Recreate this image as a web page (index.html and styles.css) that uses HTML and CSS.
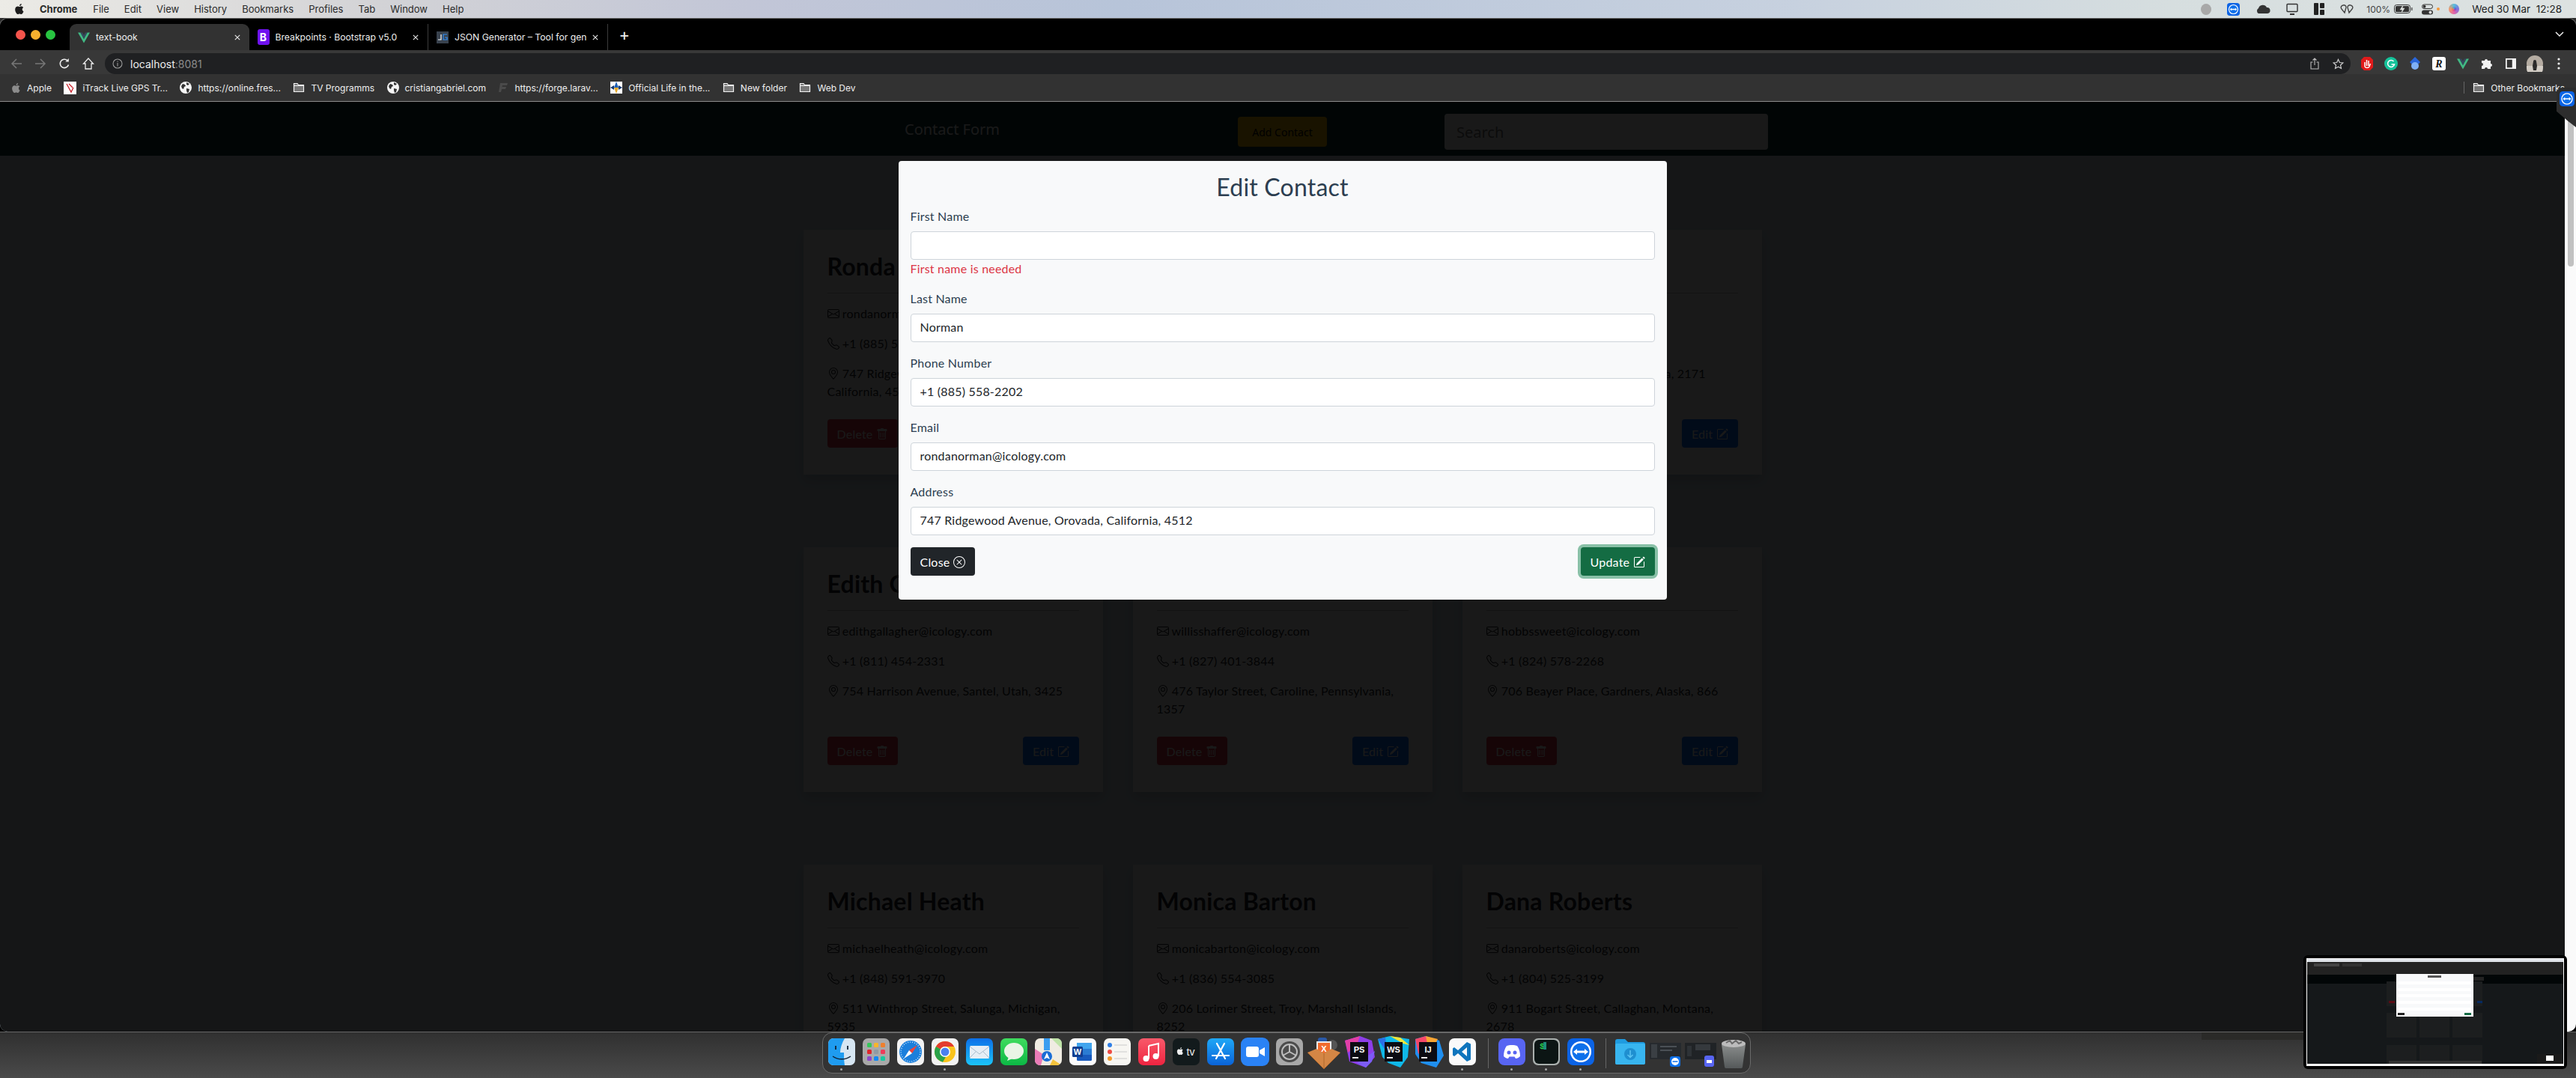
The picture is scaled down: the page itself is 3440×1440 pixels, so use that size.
FILE: index.html
```html
<!DOCTYPE html>
<html lang="en">
<head>
    <meta charset="UTF-8">
    <title>text-book</title>
    <link rel="stylesheet" href="styles.css">
</head>
<body>

    <!-- shared icons -->
    <svg class="defs" width="0" height="0">
        <symbol id="i-envelope" viewBox="0 0 16 16"><path d="M0 4a2 2 0 0 1 2-2h12a2 2 0 0 1 2 2v8a2 2 0 0 1-2 2H2a2 2 0 0 1-2-2V4Zm2-1a1 1 0 0 0-1 1v.217l7 4.2 7-4.2V4a1 1 0 0 0-1-1H2Zm13 2.383-4.708 2.825L15 11.105V5.383Zm-.034 6.876-5.64-3.471L8 9.583l-1.326-.795-5.64 3.47A1 1 0 0 0 2 13h12a1 1 0 0 0 .966-.741ZM1 11.105l4.708-2.897L1 5.383v5.722Z"/></symbol>
        <symbol id="i-phone" viewBox="0 0 16 16"><path d="M3.654 1.328a.678.678 0 0 0-1.015-.063L1.605 2.3c-.483.484-.661 1.169-.45 1.77a17.568 17.568 0 0 0 4.168 6.608 17.569 17.569 0 0 0 6.608 4.168c.601.211 1.286.033 1.77-.45l1.034-1.034a.678.678 0 0 0-.063-1.015l-2.307-1.794a.678.678 0 0 0-.58-.122l-2.19.547a1.745 1.745 0 0 1-1.657-.459L5.482 8.062a1.745 1.745 0 0 1-.46-1.657l.548-2.19a.678.678 0 0 0-.122-.58L3.654 1.328zM1.884.511a1.745 1.745 0 0 1 2.612.163L6.29 2.98c.329.423.445.974.315 1.494l-.547 2.19a.678.678 0 0 0 .178.643l2.457 2.457a.678.678 0 0 0 .644.178l2.189-.547a1.745 1.745 0 0 1 1.494.315l2.306 1.794c.829.645.905 1.87.163 2.611l-1.034 1.034c-.74.74-1.846 1.065-2.877.702a18.634 18.634 0 0 1-7.01-4.42 18.634 18.634 0 0 1-4.42-7.009c-.362-1.03-.037-2.137.703-2.877L1.885.511z"/></symbol>
        <symbol id="i-geo" viewBox="0 0 16 16"><path d="M12.166 8.94c-.524 1.062-1.234 2.12-1.96 3.07A31.493 31.493 0 0 1 8 14.58a31.481 31.481 0 0 1-2.206-2.57c-.726-.95-1.436-2.008-1.96-3.07C3.304 7.867 3 6.862 3 6a5 5 0 0 1 10 0c0 .862-.305 1.867-.834 2.94zM8 16s6-5.686 6-10A6 6 0 0 0 2 6c0 4.314 6 10 6 10z"/><path d="M8 8a2 2 0 1 1 0-4 2 2 0 0 1 0 4zm0 1a3 3 0 1 0 0-6 3 3 0 0 0 0 6z"/></symbol>
        <symbol id="i-trash" viewBox="0 0 16 16"><path d="M5.5 5.5A.5.5 0 0 1 6 6v6a.5.5 0 0 1-1 0V6a.5.5 0 0 1 .5-.5zm2.5 0a.5.5 0 0 1 .5.5v6a.5.5 0 0 1-1 0V6a.5.5 0 0 1 .5-.5zm3 .5a.5.5 0 0 0-1 0v6a.5.5 0 0 0 1 0V6z"/><path d="M14.5 3a1 1 0 0 1-1 1H13v9a2 2 0 0 1-2 2H5a2 2 0 0 1-2-2V4h-.5a1 1 0 0 1-1-1V2a1 1 0 0 1 1-1H6a1 1 0 0 1 1-1h2a1 1 0 0 1 1 1h3.5a1 1 0 0 1 1 1v1zM4.118 4 4 4.059V13a1 1 0 0 0 1 1h6a1 1 0 0 0 1-1V4.059L11.882 4H4.118zM2.5 3V2h11v1h-11z"/></symbol>
        <symbol id="i-pencil" viewBox="0 0 16 16"><path d="M15.502 1.94a.5.5 0 0 1 0 .706L14.459 3.69l-2-2L13.502.646a.5.5 0 0 1 .707 0l1.293 1.293zm-1.75 2.456-2-2L4.939 9.21a.5.5 0 0 0-.121.196l-.805 2.414a.25.25 0 0 0 .316.316l2.414-.805a.5.5 0 0 0 .196-.12l6.813-6.814z"/><path d="M1 13.5A1.5 1.5 0 0 0 2.5 15h11a1.5 1.5 0 0 0 1.5-1.5v-6a.5.5 0 0 0-1 0v6a.5.5 0 0 1-.5.5h-11a.5.5 0 0 1-.5-.5v-11a.5.5 0 0 1 .5-.5H9a.5.5 0 0 0 0-1H2.5A1.5 1.5 0 0 0 1 2.5v11z"/></symbol>
        <symbol id="i-xcircle" viewBox="0 0 16 16"><path d="M8 15A7 7 0 1 1 8 1a7 7 0 0 1 0 14zm0 1A8 8 0 1 0 8 0a8 8 0 0 0 0 16z"/><path d="M4.646 4.646a.5.5 0 0 1 .708 0L8 7.293l2.646-2.647a.5.5 0 0 1 .708.708L8.707 8l2.647 2.646a.5.5 0 0 1-.708.708L8 8.707l-2.646 2.647a.5.5 0 0 1-.708-.708L7.293 8 4.646 5.354a.5.5 0 0 1 0-.708z"/></symbol>
        <symbol id="i-apple" viewBox="0 0 16 18"><path d="M12.2 9.6c0-2 1.6-3 1.7-3-1-1.400-2.400-1.600-2.900-1.600-1.200-.1-2.400.7-3 .7s-1.600-.7-2.600-.7C4 5 2.700 5.800 2 7c-1.400 2.400-.4 6 1 8 .7 1 1.500 2.100 2.500 2 1 0 1.400-.6 2.600-.6s1.500.6 2.600.6 1.800-1 2.400-2c.8-1.100 1.100-2.200 1.100-2.300-.1 0-2-.8-2-3.100zM10.300 3.400c.5-.7.900-1.600.8-2.500-.8 0-1.700.5-2.300 1.200-.5.6-.9 1.500-.8 2.400.9.100 1.800-.4 2.300-1.100z"/></symbol>
        <symbol id="i-globe" viewBox="0 0 16 16"><circle cx="8" cy="8" r="8" fill="#f4f4f4"/><path d="M4 3l3 1 1 2-2 1-1 3-2-1-1-3zM9 9l4 1-1 4-2 1-1-3zM9 1l4 2-2 2-2-1z" fill="#323232"/></symbol>
        <symbol id="i-folder" viewBox="0 0 16 16"><path d="M1.500 2.500h4.500l1.500 2h7v9h-13z" fill="#777" stroke="#f2f2f2" stroke-width="1.200"/><path d="M1.500 5.500h13" stroke="#f2f2f2" stroke-width="1.200"/></symbol>
        <symbol id="i-x" viewBox="0 0 10 10"><path d="M1 1l8 8M9 1l-8 8" stroke="#eee" stroke-width="1.300"/></symbol>
        <symbol id="i-vue" viewBox="0 0 16 16"><path d="M0 1.500h3.400L8 10l4.600-8.500H16L8 15.500z" fill="#41b883"/><path d="M3.400 1.500h2.700L8 5l1.900-3.500h2.700L8 10z" fill="#35495e"/></symbol>
        <symbol id="i-tv" viewBox="0 0 36 36"><rect width="36" height="36" rx="8" fill="#0b63e5"/><circle cx="18" cy="18" r="14" fill="#fff"/><circle cx="18" cy="18" r="11.500" fill="#0e71eb"/><path d="M8 18l5-4v2.500h10V14l5 4-5 4v-2.500H13V22z" fill="#fff"/></symbol>
    </svg>

    <div class="menubar">
        <svg class="apple-logo" width="14" height="16"><use href="#i-apple"/></svg>
        <strong>Chrome</strong>
        <span>File</span><span>Edit</span><span>View</span><span>History</span><span>Bookmarks</span><span>Profiles</span><span>Tab</span><span>Window</span><span>Help</span>

        <div class="status">
            <i class="st-dot"></i>
            <svg width="17" height="17"><use href="#i-tv"/></svg>
            <svg width="20" height="14" viewBox="0 0 20 14"><path d="M4 13a4 4 0 0 1 0-7 6 6 0 0 1 11-1 4 4 0 0 1 1 8z" fill="#333"/></svg>
            <svg width="16" height="16" viewBox="0 0 16 16" fill="none" stroke="#333" stroke-width="1.400"><rect x="1" y="1.500" width="14" height="10" rx="1"/><path d="M5 15h6" stroke-width="2"/></svg>
            <svg width="14" height="16" viewBox="0 0 14 16" fill="#222"><rect width="6" height="16" rx="1"/><rect x="8" width="6" height="7" rx="1"/><rect x="8" y="9" width="6" height="7" rx="1"/></svg>
            <svg width="18" height="15" viewBox="0 0 18 15" fill="none" stroke="#444" stroke-width="1.400"><path d="M4 2a3 3 0 0 1 4 3l-2 7-4-5a3 3 0 0 1 2-5zM14 2a3 3 0 0 0-4 3l2 7 4-5a3 3 0 0 0-2-5z"/></svg>
            <span class="st-pct">100%</span>
            <svg width="25" height="12" viewBox="0 0 25 12"><rect x=".5" y=".5" width="21" height="11" rx="3" fill="none" stroke="#333"/><rect x="2" y="2" width="18" height="8" rx="1.500" fill="#333"/><path d="M12 1L8 7h3l-1 4 4-6h-3z" fill="#dfe3e0" stroke="#dfe3e0" stroke-width=".5"/><rect x="23" y="4" width="1.500" height="4" fill="#555"/></svg>
            <svg class="st-toggle" width="15" height="15" viewBox="0 0 15 15"><rect x=".5" y="1" width="14" height="5.500" rx="2.700" fill="none" stroke="#333"/><circle cx="3.500" cy="3.700" r="2" fill="#333"/><rect y="8.500" width="15" height="6" rx="3" fill="#333"/><circle cx="11.500" cy="11.500" r="2" fill="#ddd"/></svg>
            <i class="st-orange"></i>
            <i class="st-siri"></i>
            <span class="st-clock">Wed 30 Mar&nbsp;&nbsp;12:28</span>
        </div>
    </div>

    <div class="window">
        <div class="tabstrip">
            <div class="lights"><i class="red"></i><i class="yellow"></i><i class="green"></i></div>
            <div class="tab active">
                <svg width="16" height="16"><use href="#i-vue"/></svg>
                <span class="tab-title">text-book</span>
                <svg class="tab-x" width="8" height="8"><use href="#i-x"/></svg>
            </div>
            <div class="tab">
                <b class="fav-b">B</b>
                <span class="tab-title">Breakpoints · Bootstrap v5.0</span>
                <svg class="tab-x" width="8" height="8"><use href="#i-x"/></svg>
            </div>
            <div class="tab">
                <svg width="16" height="16" viewBox="0 0 16 16"><rect width="16" height="16" fill="#39424e"/><path d="M6 4v7H2" fill="none" stroke="#fff" stroke-width="1.200"/><path d="M14 4H9v7h5V8h-3" fill="none" stroke="#2e8df5" stroke-width="1.200"/></svg>
                <span class="tab-title">JSON Generator – Tool for gen</span>
                <svg class="tab-x" width="8" height="8"><use href="#i-x"/></svg>
            </div>
            <span class="tab-plus">+</span>
            <svg class="tab-chevron" width="12" height="8" viewBox="0 0 12 8"><path d="M1 1l5 5 5-5" fill="none" stroke="#eee" stroke-width="1.500"/></svg>
        </div>

        <div class="toolbar">
            <div class="nav-icons">
                <svg width="16" height="16" viewBox="0 0 16 16" fill="none" stroke="#777" stroke-width="1.500"><path d="M15 8H2M8 2L2 8l6 6"/></svg>
                <svg width="16" height="16" viewBox="0 0 16 16" fill="none" stroke="#777" stroke-width="1.500"><path d="M1 8h13M8 2l6 6-6 6"/></svg>
                <svg width="16" height="16" viewBox="0 0 16 16" fill="none" stroke="#eee" stroke-width="1.600"><path d="M13.500 9.500A5.700 5.700 0 1 1 12 3.800"/><path d="M13.800 1v4.500H9.300" fill="#eee" stroke="none"/></svg>
                <svg width="16" height="16" viewBox="0 0 16 16" fill="none" stroke="#eee" stroke-width="1.300"><path d="M8 1L1.500 8H4v7h8V8h2.500z"/></svg>
            </div>
            <div class="omnibox">
                <svg width="14" height="14" viewBox="0 0 14 14" fill="none" stroke="#999" stroke-width="1.100"><circle cx="7" cy="7" r="6"/><path d="M7 6v4.500M7 3.500v1.200"/></svg>
                <span class="url">localhost<em>:8081</em></span>
                <svg class="omni-share" width="12" height="16" viewBox="0 0 12 16" fill="none" stroke="#bbb" stroke-width="1.100"><path d="M3.500 6H1v9h10V6H8.500M6 10V1M3.500 3.500L6 1l2.500 2.500"/></svg>
                <svg class="omni-star" width="15" height="15" viewBox="0 0 16 16" fill="none" stroke="#ccc" stroke-width="1.300"><path d="M8 1.500l2 4.400 4.800.5-3.600 3.200 1 4.700L8 11.900l-4.200 2.400 1-4.700L1.200 6.400 6 5.900z"/></svg>
            </div>
            <div class="ext-icons">
                <svg width="18" height="20" viewBox="0 0 18 20"><path d="M5 1h8l4 4v10l-4 4H5l-4-4V5z" fill="#e01b1b"/><path d="M6 14V8M8.500 13V5M11 13V6M6 14c1 2 5 2 6 0l1.500-4" stroke="#fff" stroke-width="1.500" fill="none"/></svg>
                <svg width="18" height="18" viewBox="0 0 18 18"><circle cx="9" cy="9" r="9" fill="#15c39a"/><path d="M12.500 6a4.500 4.500 0 1 0 1 4H9.500" fill="none" stroke="#fff" stroke-width="1.500"/></svg>
                <svg width="18" height="18" viewBox="0 0 18 18"><path d="M9 0l7 7-3 3H5L2 7z" fill="#2a66d9"/><circle cx="9" cy="12" r="5" fill="#7fb0f5"/></svg>
                <svg width="18" height="18" viewBox="0 0 18 18"><rect width="18" height="18" rx="3" fill="#fff"/><text x="9" y="14" font-family="Liberation Serif, serif" font-size="14" font-style="italic" font-weight="700" text-anchor="middle" fill="#111">R</text></svg>
                <svg width="18" height="16"><use href="#i-vue"/></svg>
                <svg width="16" height="16" viewBox="0 0 16 16"><path d="M1 4h4a2 2 0 1 1 4 0h4v4a2 2 0 1 1 0 4v3H9a2 2 0 1 0-4 0H1v-4a2 2 0 1 0 0-4z" fill="#f2f2f2"/></svg>
                <svg width="14" height="16" viewBox="0 0 16 16"><rect width="16" height="16" fill="#f4f4f4"/><rect x="2" y="2" width="8" height="12" fill="#333"/></svg>
                <svg width="22" height="22" viewBox="0 0 22 22"><circle cx="11" cy="11" r="11" fill="#b5aca2"/><path d="M0 14h22v3a11 11 0 0 1-22 0z" fill="#d2ccc4"/><path d="M9 8a2 2 0 0 1 4 0l1 6-1 6H9l-1-6z" fill="#2b2a2a"/></svg>
                <svg width="4" height="16" viewBox="0 0 4 16" fill="#eee"><circle cx="2" cy="2" r="1.600"/><circle cx="2" cy="8" r="1.600"/><circle cx="2" cy="14" r="1.600"/></svg>
            </div>
        </div>

        <div class="bookmarks">
            <span class="bm"><svg width="13" height="15" class="bm-apple"><use href="#i-apple"/></svg>Apple</span>
            <span class="bm"><svg width="17" height="17" viewBox="0 0 17 17"><rect width="17" height="17" fill="#fff"/><path d="M4 3l6 11 3-6M7 3l5 5" fill="none" stroke="#c8202a" stroke-width="1.300"/></svg>iTrack Live GPS Tr...</span>
            <span class="bm"><svg width="16" height="16"><use href="#i-globe"/></svg>https://online.fres...</span>
            <span class="bm"><svg width="16" height="16"><use href="#i-folder"/></svg>TV Programms</span>
            <span class="bm"><svg width="16" height="16"><use href="#i-globe"/></svg>cristiangabriel.com</span>
            <span class="bm"><svg width="14" height="14" viewBox="0 0 14 14"><path d="M3 1h10l-1 3H6L5.500 6H11l-1 3H5l-1 4H1z" fill="#4a4a4a"/></svg>https://forge.larav...</span>
            <span class="bm"><svg width="16" height="16" viewBox="0 0 16 16"><rect width="16" height="16" fill="#fff"/><path d="M8 0l3 8H5z" fill="#1e5fb4"/><path d="M8 16L5 8h6z" fill="#e8a92a"/><path d="M0 8l5-3v6zM16 8l-5-3v6z" fill="#123a75"/></svg>Official Life in the...</span>
            <span class="bm"><svg width="16" height="16"><use href="#i-folder"/></svg>New folder</span>
            <span class="bm"><svg width="16" height="16"><use href="#i-folder"/></svg>Web Dev</span>
            <span class="bm bm-other"><svg width="16" height="16"><use href="#i-folder"/></svg>Other Bookmarks</span>
        </div>

        <div class="content">
            <div class="page">
                <nav class="topnav">
                    <span class="brand">Contact Form</span>
                    <button class="add-btn">Add Contact</button>
                    <input class="search" type="text" placeholder="Search">
                </nav>

                <div class="cards">
                    <div class="card">
                        <h2>Ronda Norman</h2>
                        <hr>
                        <p><svg class="ic"><use href="#i-envelope"/></svg> rondanorman@icology.com</p>
                        <p><svg class="ic"><use href="#i-phone"/></svg> +1 (885) 558-2202</p>
                        <p class="addr"><svg class="ic"><use href="#i-geo"/></svg> 747 Ridgewood Avenue, Orovada, California, 4512</p>
                        <div class="actions">
                            <button class="btn danger">Delete <svg class="ic"><use href="#i-trash"/></svg></button>
                            <button class="btn primary">Edit <svg class="ic"><use href="#i-pencil"/></svg></button>
                        </div>
                    </div>
                    <div class="card">
                        <h2>Lela Fox</h2>
                        <hr>
                        <p><svg class="ic"><use href="#i-envelope"/></svg> lelafox@icology.com</p>
                        <p><svg class="ic"><use href="#i-phone"/></svg> +1 (830) 412-2790</p>
                        <p class="addr"><svg class="ic"><use href="#i-geo"/></svg> 310 Quay Street, Elwood, Iowa, 6120</p>
                        <div class="actions">
                            <button class="btn danger">Delete <svg class="ic"><use href="#i-trash"/></svg></button>
                            <button class="btn primary">Edit <svg class="ic"><use href="#i-pencil"/></svg></button>
                        </div>
                    </div>
                    <div class="card">
                        <h2>Rosa Kirk</h2>
                        <hr>
                        <p><svg class="ic"><use href="#i-envelope"/></svg> rosakirk@icology.com</p>
                        <p><svg class="ic"><use href="#i-phone"/></svg> +1 (872) 536-1184</p>
                        <p class="addr"><svg class="ic"><use href="#i-geo"/></svg> 205 Vista Place, Marion, Manila, 2171</p>
                        <div class="actions">
                            <button class="btn danger">Delete <svg class="ic"><use href="#i-trash"/></svg></button>
                            <button class="btn primary">Edit <svg class="ic"><use href="#i-pencil"/></svg></button>
                        </div>
                    </div>
                    <div class="card">
                        <h2>Edith Gallagher</h2>
                        <hr>
                        <p><svg class="ic"><use href="#i-envelope"/></svg> edithgallagher@icology.com</p>
                        <p><svg class="ic"><use href="#i-phone"/></svg> +1 (811) 454-2331</p>
                        <p class="addr"><svg class="ic"><use href="#i-geo"/></svg> 754 Harrison Avenue, Santel, Utah, 3425</p>
                        <div class="actions">
                            <button class="btn danger">Delete <svg class="ic"><use href="#i-trash"/></svg></button>
                            <button class="btn primary">Edit <svg class="ic"><use href="#i-pencil"/></svg></button>
                        </div>
                    </div>
                    <div class="card">
                        <h2>Willis Shaffer</h2>
                        <hr>
                        <p><svg class="ic"><use href="#i-envelope"/></svg> willisshaffer@icology.com</p>
                        <p><svg class="ic"><use href="#i-phone"/></svg> +1 (827) 401-3844</p>
                        <p class="addr"><svg class="ic"><use href="#i-geo"/></svg> 476 Taylor Street, Caroline, Pennsylvania, 1357</p>
                        <div class="actions">
                            <button class="btn danger">Delete <svg class="ic"><use href="#i-trash"/></svg></button>
                            <button class="btn primary">Edit <svg class="ic"><use href="#i-pencil"/></svg></button>
                        </div>
                    </div>
                    <div class="card">
                        <h2>Hobbs Sweet</h2>
                        <hr>
                        <p><svg class="ic"><use href="#i-envelope"/></svg> hobbssweet@icology.com</p>
                        <p><svg class="ic"><use href="#i-phone"/></svg> +1 (824) 578-2268</p>
                        <p class="addr"><svg class="ic"><use href="#i-geo"/></svg> 706 Beayer Place, Gardners, Alaska, 866</p>
                        <div class="actions">
                            <button class="btn danger">Delete <svg class="ic"><use href="#i-trash"/></svg></button>
                            <button class="btn primary">Edit <svg class="ic"><use href="#i-pencil"/></svg></button>
                        </div>
                    </div>
                    <div class="card">
                        <h2>Michael Heath</h2>
                        <hr>
                        <p><svg class="ic"><use href="#i-envelope"/></svg> michaelheath@icology.com</p>
                        <p><svg class="ic"><use href="#i-phone"/></svg> +1 (848) 591-3970</p>
                        <p class="addr"><svg class="ic"><use href="#i-geo"/></svg> 511 Winthrop Street, Salunga, Michigan, 5935</p>
                    </div>
                    <div class="card">
                        <h2>Monica Barton</h2>
                        <hr>
                        <p><svg class="ic"><use href="#i-envelope"/></svg> monicabarton@icology.com</p>
                        <p><svg class="ic"><use href="#i-phone"/></svg> +1 (836) 554-3085</p>
                        <p class="addr"><svg class="ic"><use href="#i-geo"/></svg> 206 Lorimer Street, Troy, Marshall Islands, 8252</p>
                    </div>
                    <div class="card">
                        <h2>Dana Roberts</h2>
                        <hr>
                        <p><svg class="ic"><use href="#i-envelope"/></svg> danaroberts@icology.com</p>
                        <p><svg class="ic"><use href="#i-phone"/></svg> +1 (804) 525-3199</p>
                        <p class="addr"><svg class="ic"><use href="#i-geo"/></svg> 911 Bogart Street, Callaghan, Montana, 2678</p>
                    </div>
                </div>

                <!-- modal sits over the dimmed page -->
                <div class="backdrop">
                    <form class="modal">
                        <h2>Edit Contact</h2>
                        <label>First Name</label>
                        <input type="text" value="">
                        <div class="error">First name is needed</div>
                        <label>Last Name</label>
                        <input class="spaced" type="text" value="Norman">
                        <label>Phone Number</label>
                        <input class="spaced" type="text" value="+1 (885) 558-2202">
                        <label>Email</label>
                        <input class="spaced" type="text" value="rondanorman@icology.com">
                        <label>Address</label>
                        <input class="spaced" type="text" value="747 Ridgewood Avenue, Orovada, California, 4512">
                        <div class="modal-actions">
                            <button type="button" class="btn dark">Close <svg class="ic"><use href="#i-xcircle"/></svg></button>
                            <button type="button" class="btn update">Update <svg class="ic"><use href="#i-pencil"/></svg></button>
                        </div>
                    </form>
                </div>
            </div>
            <div class="scrollbar"><div class="thumb"></div></div>
        </div>

        <div class="tv-handle"><svg width="20" height="20"><use href="#i-tv"/></svg></div>
    </div>

    <div class="dock-row">
        <div class="dock">
            <!-- Finder -->
            <div class="app"><svg viewBox="0 0 36 36"><rect width="36" height="36" rx="7" fill="#d6e6f2"/><path d="M7 0h15c-4 7-6 13-6 19h5c0 6 0 11 1 17H7a7 7 0 0 1-7-7V7a7 7 0 0 1 7-7z" fill="#1f9cf0"/><path d="M10 10v5M26 10v5" stroke="#123" stroke-width="1.800"/><path d="M6 24c7 5 17 5 24 0" fill="none" stroke="#123" stroke-width="1.300"/></svg><i class="run"></i></div>
            <!-- Launchpad -->
            <div class="app"><svg viewBox="0 0 36 36"><rect width="36" height="36" rx="7" fill="#a9a9a9"/><rect x="6" y="6" width="6" height="6" rx="1.500" fill="#35c759"/><rect x="15" y="6" width="6" height="6" rx="1.500" fill="#f7b52b"/><rect x="24" y="6" width="6" height="6" rx="1.500" fill="#ee7f2d"/><rect x="6" y="15" width="6" height="6" rx="1.500" fill="#e0262b"/><rect x="15" y="15" width="6" height="6" rx="1.500" fill="#8f9aa3"/><rect x="24" y="15" width="6" height="6" rx="1.500" fill="#ee3a5a"/><rect x="6" y="24" width="6" height="6" rx="1.500" fill="#8d49c9"/><rect x="15" y="24" width="6" height="6" rx="1.500" fill="#1489f2"/><rect x="24" y="24" width="6" height="6" rx="1.500" fill="#17c8a0"/></svg></div>
            <!-- Safari -->
            <div class="app"><svg viewBox="0 0 36 36"><rect width="36" height="36" rx="7" fill="#f2f2f2"/><circle cx="18" cy="18" r="15" fill="#1b7fdc"/><circle cx="18" cy="18" r="13" fill="none" stroke="#cfe6fa" stroke-width="1.500" stroke-dasharray="1 2"/><path d="M27 9l-11 7 4 4z" fill="#f0453a"/><path d="M9 27l11-7-4-4z" fill="#fff"/></svg></div>
            <!-- Chrome -->
            <div class="app"><svg viewBox="0 0 36 36"><rect width="36" height="36" rx="7" fill="#f2f2f2"/><circle cx="18" cy="18" r="14" fill="#f9c31c"/><path d="M18 4a14 14 0 0 1 12.100 7H18a7 7 0 0 0-6 3.500L5.900 11A14 14 0 0 1 18 4z" fill="#e33b2e"/><path d="M5.900 11A14 14 0 0 0 15 31.700l6-10.500a7 7 0 0 1-9-6.700z" fill="#2aa24a"/><circle cx="18" cy="18" r="7" fill="#fff"/><circle cx="18" cy="18" r="5.500" fill="#4a80ee"/></svg><i class="run"></i></div>
            <!-- Mail -->
            <div class="app"><svg viewBox="0 0 36 36"><defs><linearGradient id="g-mail" x1="0" y1="0" x2="0" y2="1"><stop offset="0" stop-color="#0c6fe8"/><stop offset="1" stop-color="#1cc4f8"/></linearGradient></defs><rect width="36" height="36" rx="7" fill="url(#g-mail)"/><rect x="5" y="10" width="26" height="17" rx="1.500" fill="#e6eef5"/><path d="M5 11l13 10 13-10M5 26l9-9M31 26l-9-9" fill="none" stroke="#a9bccb"/></svg></div>
            <!-- Messages -->
            <div class="app"><svg viewBox="0 0 36 36"><defs><linearGradient id="g-msg" x1="0" y1="0" x2="0" y2="1"><stop offset="0" stop-color="#3fdc5e"/><stop offset="1" stop-color="#0cb845"/></linearGradient></defs><rect width="36" height="36" rx="7" fill="url(#g-msg)"/><ellipse cx="18" cy="17" rx="13" ry="11" fill="#e9f5e6"/><path d="M11 25l-2 5 7-3z" fill="#e9f5e6"/></svg></div>
            <!-- Maps -->
            <div class="app"><svg viewBox="0 0 36 36"><clipPath id="c-maps"><rect width="36" height="36" rx="7"/></clipPath><g clip-path="url(#c-maps)"><rect width="36" height="36" fill="#f0ece2"/><path d="M0 14l12 8-4 14H0z" fill="#ea7bb7"/><path d="M22 0h14v14z" fill="#bfe4a8"/><path d="M12 0h8v16h-8z" fill="#3a9df0"/><path d="M20 36l4-8 12 8z" fill="#f5c33c"/></g><circle cx="16" cy="24" r="7" fill="#1a6dd6"/><path d="M16 19l4 9-4-2-4 2z" fill="#fff"/></svg></div>
            <!-- Word -->
            <div class="app"><svg viewBox="0 0 36 36"><rect width="36" height="36" rx="7" fill="#fbfbfb"/><rect x="10" y="6" width="20" height="24" rx="1.500" fill="#185abd"/><rect x="10" y="6" width="20" height="8" fill="#41a5ee"/><rect x="10" y="14" width="20" height="8" fill="#2b7cd3"/><rect x="4" y="11" width="14" height="14" rx="1.500" fill="#103f91"/><text x="11" y="22" font-family="Liberation Sans, sans-serif" font-size="11" font-weight="700" text-anchor="middle" fill="#fff">W</text></svg></div>
            <!-- Reminders -->
            <div class="app"><svg viewBox="0 0 36 36"><rect width="36" height="36" rx="7" fill="#f7f6f2"/><circle cx="8" cy="9" r="3" fill="#2f7fe6"/><circle cx="8" cy="18" r="3" fill="#ef4b45"/><circle cx="8" cy="27" r="3" fill="#f39a2d"/><path d="M14 9h17M14 18h17M14 27h17" stroke="#c9c9c9" stroke-width="1.200"/></svg></div>
            <!-- Music -->
            <div class="app"><svg viewBox="0 0 36 36"><defs><linearGradient id="g-mus" x1="0" y1="0" x2="0" y2="1"><stop offset="0" stop-color="#f9596a"/><stop offset="1" stop-color="#ee2440"/></linearGradient></defs><rect width="36" height="36" rx="7" fill="url(#g-mus)"/><path d="M14 10l13-3v17" fill="none" stroke="#fff" stroke-width="2"/><path d="M14 10v17" stroke="#fff" stroke-width="2"/><circle cx="10.500" cy="27" r="4" fill="#fff"/><circle cx="23.500" cy="24" r="4" fill="#fff"/></svg></div>
            <!-- Apple TV -->
            <div class="app"><svg viewBox="0 0 36 36"><rect width="36" height="36" rx="7" fill="#121a1c"/><use href="#i-apple" x="5" y="11" width="10" height="12" fill="#eee"/><text x="24" y="23" font-family="Liberation Sans, sans-serif" font-size="14" text-anchor="middle" fill="#eee">tv</text></svg></div>
            <!-- App Store -->
            <div class="app"><svg viewBox="0 0 36 36"><defs><linearGradient id="g-as" x1="0" y1="0" x2="0" y2="1"><stop offset="0" stop-color="#1fa8f7"/><stop offset="1" stop-color="#0a63d8"/></linearGradient></defs><rect width="36" height="36" rx="7" fill="url(#g-as)"/><path d="M13 7l11 20M23 7L12 27M7 23h22" stroke="#fff" stroke-width="2.200" stroke-linecap="round"/></svg></div>
            <!-- Zoom -->
            <div class="app wide"><svg viewBox="0 0 38 38"><rect width="38" height="38" rx="9" fill="#2a82f5"/><rect x="7" y="12" width="17" height="14" rx="3" fill="#fff"/><path d="M25 17l7-4v12l-7-4z" fill="#fff"/></svg></div>
            <!-- System Preferences -->
            <div class="app"><svg viewBox="0 0 36 36"><rect width="36" height="36" rx="7" fill="#a8a8a8"/><circle cx="18" cy="18" r="14" fill="#4c4c4c"/><circle cx="18" cy="18" r="10" fill="none" stroke="#bdbdbd" stroke-width="2"/><path d="M18 18V8M18 18l-9 5M18 18l9 5" stroke="#bdbdbd" stroke-width="2"/></svg></div>
            <!-- XAMPP -->
            <div class="app wide2"><svg viewBox="0 0 44 44"><rect x="14" y="2" width="12" height="14" rx="3" fill="#2958a8"/><circle cx="33" cy="12" r="7" fill="#555"/><rect x="12" y="7" width="20" height="18" fill="#eaeaea"/><rect x="14" y="9" width="16" height="14" fill="#f26b2d"/><text x="22" y="21" font-family="Liberation Sans, sans-serif" font-size="11" font-weight="700" text-anchor="middle" fill="#fff">X</text><path d="M0 22l12-5 10 6 10-6 12 5-8 8-14 14-14-14z" fill="#d48645"/><path d="M22 23v21M0 22l22 22 22-22" fill="none" stroke="#a65f26" stroke-width=".8"/></svg></div>
            <!-- PhpStorm -->
            <div class="app jb"><svg viewBox="0 0 42 42"><path d="M2 6L22 0l16 6 4 22-12 14L8 34z" fill="#8d3ee8"/><path d="M2 6L22 0l-4 12L6 22z" fill="#e23fa6"/><path d="M42 20l-4 14-8 8-12-6z" fill="#7c5cf5"/><rect x="9" y="8" width="24" height="26" fill="#0b0b12"/><text x="21" y="22" font-family="Liberation Sans, sans-serif" font-size="11" font-weight="700" text-anchor="middle" fill="#fff">PS</text><rect x="12" y="28" width="8" height="1.800" fill="#fff"/></svg></div>
            <!-- WebStorm -->
            <div class="app jb"><svg viewBox="0 0 42 42"><path d="M0 4l16-4 26 4-2 24-10 14-16-6-8-8z" fill="#0fb8e8"/><path d="M16 0l14 2 12 10-8-2z" fill="#f0e53a"/><path d="M0 4l10-2 2 20z" fill="#2a6fe8"/><rect x="9" y="8" width="24" height="26" fill="#0b0b12"/><text x="21" y="22" font-family="Liberation Sans, sans-serif" font-size="11" font-weight="700" text-anchor="middle" fill="#fff">WS</text><rect x="12" y="28" width="8" height="1.800" fill="#fff"/></svg></div>
            <!-- IntelliJ -->
            <div class="app jb"><svg viewBox="0 0 42 42"><path d="M4 4l14-4 18 6 6 20-10 16-20-6-8-12z" fill="#1f8ff0"/><path d="M4 4l14-4 4 10-14 14z" fill="#f5486a"/><path d="M18 0l16 4-4 8-10-2z" fill="#f9a533"/><rect x="9" y="8" width="24" height="26" fill="#0b0b12"/><text x="21" y="22" font-family="Liberation Sans, sans-serif" font-size="11" font-weight="700" text-anchor="middle" fill="#fff">IJ</text><rect x="12" y="28" width="8" height="1.800" fill="#fff"/></svg></div>
            <!-- VS Code -->
            <div class="app"><svg viewBox="0 0 36 36"><rect width="36" height="36" rx="7" fill="#fafafa"/><path d="M24 5l5 2.500v21L24 31 12 20l-5 4-2-1.500V13.500L7 12l5 4zM24 12l-7 6 7 6z" fill="#0f75bd"/></svg><i class="run"></i></div>
            <i class="dock-sep"></i>
            <!-- Discord -->
            <div class="app"><svg viewBox="0 0 36 36"><rect width="36" height="36" rx="8" fill="#5865f2"/><path d="M11 10c3-1.500 11-1.500 14 0 3 4 4 9 4 14-2 2-4 3-6 3l-1.500-2.500h-7L13 27c-2 0-4-1-6-3 0-5 1-10 4-14z" fill="#fff"/><circle cx="14" cy="19" r="2.500" fill="#5865f2"/><circle cx="22" cy="19" r="2.500" fill="#5865f2"/></svg><i class="run"></i></div>
            <!-- iTerm -->
            <div class="app"><svg viewBox="0 0 36 36"><rect width="36" height="36" rx="7" fill="#aab0ae"/><rect x="2" y="2" width="32" height="32" rx="6" fill="#0c1514"/><text x="9" y="14" font-family="Liberation Mono, monospace" font-size="11" font-weight="700" fill="#27d050">$</text><rect x="14" y="5" width="4" height="10" fill="#1c8f7a"/></svg><i class="run"></i></div>
            <!-- TeamViewer -->
            <div class="app"><svg viewBox="0 0 36 36"><use href="#i-tv"/></svg><i class="run"></i></div>
            <i class="dock-sep sep2"></i>
            <!-- Downloads folder -->
            <div class="app wide3"><svg viewBox="0 0 40 36"><path d="M0 4a3 3 0 0 1 3-3h10l4 4h20a3 3 0 0 1 3 3v24a3 3 0 0 1-3 3H3a3 3 0 0 1-3-3z" fill="#1f9bdf"/><rect y="7" width="40" height="28" rx="2" fill="#38b5ef"/><circle cx="20" cy="21" r="8" fill="#1f8fd0"/><path d="M20 16v9M16.500 22l3.500 3.500 3.500-3.500" fill="none" stroke="#5cc4f2" stroke-width="1.500"/></svg></div>
            <!-- minimised windows -->
            <div class="app thumb-win"><svg viewBox="0 0 42 36"><rect y="4" width="42" height="22" fill="#262a2e"/><rect x="2" y="6" width="8" height="18" fill="#3a3f44"/><rect x="14" y="8" width="22" height="2" fill="#4a5055"/><rect x="14" y="13" width="16" height="2" fill="#4a5055"/><rect x="27" y="22" width="14" height="14" rx="3" fill="#0e71eb"/><circle cx="34" cy="29" r="5" fill="#fff"/><path d="M30.500 29h7" stroke="#0e71eb" stroke-width="1.500"/></svg></div>
            <div class="app thumb-win"><svg viewBox="0 0 42 36"><rect y="4" width="42" height="22" fill="#202326"/><rect x="14" y="6" width="20" height="8" fill="#35393d"/><rect x="3" y="8" width="6" height="14" fill="#2e3236"/><rect x="26" y="21" width="13" height="15" rx="3" fill="#5865f2"/><path d="M29 27h7v4h-7z" fill="#fff"/></svg></div>
            <!-- Trash -->
            <div class="app"><svg viewBox="0 0 36 40"><defs><linearGradient id="g-trash" x1="0" y1="0" x2="0" y2="1"><stop offset="0" stop-color="#8a8d8c"/><stop offset="1" stop-color="#55595a"/></linearGradient></defs><path d="M2 8h32l-4 30a2 2 0 0 1-2 2H8a2 2 0 0 1-2-2z" fill="url(#g-trash)"/><ellipse cx="18" cy="7" rx="16" ry="5" fill="#bcbcbc"/><path d="M8 6l5-3 3 4 5-4 4 4 4-2" fill="none" stroke="#6a6a6a" stroke-width="2"/></svg></div>
        </div>
    </div>

    <!-- stray window peeking out below the browser -->
    <div class="back-window"></div>

    <!-- floating screenshot preview -->
    <div class="preview">
        <svg viewBox="0 0 344 144" width="344" height="144">
            <rect width="344" height="144" fill="#fff"/>
            <rect x="1" y="1" width="342" height="4" fill="#dfe3e8"/>
            <rect x="1" y="5" width="342" height="17" fill="#222"/>
            <rect x="10" y="7" width="34" height="4" fill="#444"/>
            <rect x="48" y="7" width="26" height="4" fill="#333"/>
            <rect x="1" y="22" width="342" height="119" fill="#15181a"/>
            <rect x="1" y="22" width="342" height="12" fill="#020607"/>
            <rect x="165" y="25" width="12" height="5" fill="#c98a10"/>
            <rect x="193" y="25" width="44" height="5" fill="#222"/>
            <rect x="107" y="31" width="40" height="33" fill="#1c1e1f"/>
            <rect x="151" y="31" width="40" height="33" fill="#1c1e1f"/>
            <rect x="195" y="31" width="40" height="33" fill="#1c1e1f"/>
            <rect x="107" y="73" width="40" height="33" fill="#1c1e1f"/>
            <rect x="151" y="73" width="40" height="33" fill="#1c1e1f"/>
            <rect x="195" y="73" width="40" height="33" fill="#1c1e1f"/>
            <rect x="107" y="116" width="40" height="25" fill="#1c1e1f"/>
            <rect x="151" y="116" width="40" height="25" fill="#1c1e1f"/>
            <rect x="195" y="116" width="40" height="25" fill="#1c1e1f"/>
            <rect x="110" y="57" width="8" height="3" fill="#5a0b14"/>
            <rect x="228" y="57" width="7" height="3" fill="#062a60"/>
            <rect x="120" y="21" width="103" height="57" fill="#f8f9fa"/>
            <rect x="162" y="23" width="18" height="3" fill="#555"/>
            <rect x="122" y="31" width="98" height="4" fill="#fff"/>
            <rect x="122" y="40" width="98" height="4" fill="#fff"/>
            <rect x="122" y="48" width="98" height="4" fill="#fff"/>
            <rect x="122" y="57" width="98" height="4" fill="#fff"/>
            <rect x="122" y="66" width="98" height="4" fill="#fff"/>
            <rect x="122" y="73" width="9" height="3" fill="#222"/>
            <rect x="211" y="73" width="9" height="3" fill="#126b45"/>
            <rect x="110" y="137" width="124" height="4" fill="#333"/>
            <rect x="308" y="128" width="34" height="13" fill="#1a1a1a"/>
            <rect x="320" y="130" width="10" height="7" fill="#fff"/>
        </svg>
    </div>

</body>
</html>
```

FILE: styles.css
```css
* {
    box-sizing: border-box;
}

html, body {
    height: 100%;
}

body {
    margin: 0;
    width: 3440px;
    height: 1440px;
    overflow: hidden;
    position: relative;
    display: flex;
    flex-direction: column;
    font-family: 'Lato', sans-serif;
    background: linear-gradient(180deg, #2c2c2c 1370px, #4a4a4a 1440px);
}

.defs {
    position: absolute;
}

/* mac menu bar */
.menubar {
    height: 24px;
    flex: none;
    display: flex;
    align-items: center;
    gap: 20px;
    padding-left: 19px;
    font-family: 'Inter', sans-serif;
    font-size: 13px;
    color: #2a2a2a;
    background: linear-gradient(90deg, #ecebe6 0, #d3d3d6 500px, #c2c6d7 1000px, #b7c4d9 1500px, #c7d1df 2400px, #d6dedf 2900px, #dde2e1 3440px);
}

.menubar strong {
    font-weight: 700;
    margin-right: 1px;
}

.apple-logo {
    fill: #1c1c1c;
}

.status {
    margin-left: auto;
    padding-right: 19px;
    display: flex;
    align-items: center;
    gap: 21px;
}

.st-dot {
    width: 14px;
    height: 15px;
    border-radius: 50%;
    background: #a8a8a8;
}

.st-pct {
    font-size: 12px;
    color: #444;
    margin-left: -4px;
    margin-right: -16px;
}

.st-toggle {
    margin-left: -9px;
}

.st-orange {
    width: 4px;
    height: 4px;
    margin-left: -16px;
    border-radius: 50%;
    background: #f59a3c;
}

.st-siri {
    width: 14px;
    height: 14px;
    margin-left: -9px;
    border-radius: 50%;
    background: conic-gradient(#3ab4d8, #6a5ad8, #e0489a, #f08a50, #3ab4d8);
    box-shadow: inset 0 0 0 4px rgba(255,255,255,.15);
}

.st-clock {
    margin-left: -4px;
    font-size: 13.5px;
    color: #222;
}

/* browser window */
.window {
    position: relative;
    flex: none;
    height: 1353px;
    margin-top: 1px;
    border-radius: 10px 10px 0 0;
    overflow: hidden;
    background: #000;
    box-shadow: 0 0 0 1px #666;
    font-family: 'Inter', sans-serif;
}

.tabstrip {
    height: 42px;
    display: flex;
    align-items: flex-end;
    background: #000;
    padding-left: 21px;
}

.lights {
    display: flex;
    gap: 7px;
    width: 72px;
    align-self: center;
}

.lights i {
    width: 13px;
    height: 13px;
    border-radius: 50%;
}

.red { background: #f4544c; }
.yellow { background: #f5b02e; }
.green { background: #28c441; }

.tab {
    width: 239.5px;
    height: 35px;
    padding: 0 12px 0 11px;
    display: flex;
    align-items: center;
    gap: 8px;
    font-size: 12.2px;
    color: #eee;
    border-right: 1px solid #3c3c3c;
}

.tab.active {
    background: #323232;
    border-right: none;
    border-radius: 9px 9px 0 0;
}

.tab:nth-child(2) {
    border-right: none;
}

.tab-title {
    flex: 1;
    overflow: hidden;
    white-space: nowrap;
}

.tab-x {
    flex: none;
}

.fav-b {
    width: 16px;
    height: 21px;
    border-radius: 3px;
    background: #6f12f0;
    color: #fff;
    font-size: 14px;
    text-align: center;
    line-height: 21px;
}

.tab-plus {
    align-self: center;
    margin-left: 15px;
    font-size: 22px;
    color: #eee;
    line-height: 1;
}

.tab-chevron {
    align-self: center;
    margin-left: auto;
    margin-right: 16px;
}

.toolbar {
    height: 32px;
    padding-top: 4px;
    display: flex;
    align-items: center;
    background: #383838;
}

.nav-icons {
    display: flex;
    gap: 16px;
    padding-left: 14px;
    width: 140px;
}

.omnibox {
    width: 2999px;
    height: 28px;
    border-radius: 14px;
    background: #1f2022;
    display: flex;
    align-items: center;
    gap: 10px;
    padding-left: 10px;
    color: #eee;
    font-size: 14px;
}

.url em {
    font-style: normal;
    color: #8a8a8a;
}

.omni-share {
    margin-left: auto;
}

.omni-star {
    margin-left: 8px;
    margin-right: 9px;
}

.ext-icons {
    display: grid;
    grid-auto-flow: column;
    grid-auto-columns: 32px;
    place-items: center;
    margin-left: 6px;
}

.bookmarks {
    height: 37px;
    flex: none;
    padding: 0 15px;
    display: flex;
    align-items: center;
    gap: 16.5px;
    background: #323232;
    border-bottom: 1px solid #8a8a8a;
    font-size: 12px;
    color: #eee;
    white-space: nowrap;
}

.bm {
    display: flex;
    align-items: center;
    gap: 8px;
}

.bm-apple {
    fill: #8c8c8c;
}

.bm-other {
    margin-left: auto;
    padding-left: 11px;
    border-left: 1px solid #666;
}

/* page in the browser */
.content {
    display: flex;
    height: 1242px;
    overflow: hidden;
    border-radius: 0 0 10px 10px;
}

.page {
    position: relative;
    flex: 1;
    overflow: hidden;
    background: #d2e0ec;
    font-family: 'Lato', sans-serif;
    letter-spacing: .2px;
}

.topnav {
    height: 72px;
    background: #0a3238;
    display: flex;
    align-items: center;
    padding-left: 1208px;
    font-family: 'Noto Sans', sans-serif;
    letter-spacing: 0;
}

.brand {
    width: 445px;
    font-size: 20px;
    color: #fff;
}

.add-btn {
    width: 119px;
    height: 40px;
    margin-top: 8px;
    padding: 0;
    border: none;
    border-radius: 4px;
    background: #ffc107;
    color: #000;
    font: 14px 'Noto Sans', sans-serif;
}

.search {
    width: 432px;
    height: 48px;
    margin-left: 157px;
    margin-top: 8px;
    padding: 0 16px;
    border: none;
    border-radius: 4px;
    background: #fff;
    font: 20px 'Noto Sans', sans-serif;
}

.cards {
    width: 1280px;
    margin: 99px auto 0;
    display: grid;
    grid-template-columns: repeat(3, 400px);
    column-gap: 40px;
    row-gap: 97px;
    color: #212529;
}

.card {
    height: 327px;
    padding: 30px 32px 0;
    background: #fff;
    box-shadow: 0 8px 16px rgba(0,0,0,.15);
}

h2 {
    margin: 0;
    font-size: 32px;
    line-height: 38px;
    font-weight: 500;
}

.card h2 {
    font-weight: 700;
}

hr {
    margin: 16px 0 15px;
    border: none;
    border-top: 1px solid rgba(0,0,0,.25);
}

.card p {
    margin: 0 0 16px;
    font-size: 16px;
    line-height: 24px;
}

.card p.addr {
    height: 48px;
    margin-bottom: 25px;
}

.ic {
    width: 16px;
    height: 16px;
    fill: currentColor;
    vertical-align: -2px;
}

.actions {
    display: flex;
    justify-content: space-between;
}

.btn {
    height: 38px;
    padding: 0 12px;
    border: 1px solid transparent;
    border-radius: 4px;
    font: 16px 'Lato', sans-serif;
    letter-spacing: .2px;
    color: #fff;
}

.danger { background: #dc3545; }
.primary { background: #0d6efd; }
.dark { background: #212529; }

.update {
    background: #146c43;
    box-shadow: 0 0 0 4px rgba(25,135,84,.5);
}

/* dim layer and modal */
.backdrop {
    position: absolute;
    inset: 0;
    display: flex;
    justify-content: center;
    align-items: flex-start;
    padding-top: 79px;
    background: rgba(0,0,0,.9);
}

.modal {
    width: 1026px;
    padding: 16px;
    border-radius: 4px;
    background: #f8f9fa;
    color: #2c3e50;
}

.modal h2 {
    margin-bottom: 8px;
    text-align: center;
    font-weight: 400;
}

.modal label {
    display: block;
    margin-bottom: 8px;
    font-size: 16px;
    line-height: 24px;
}

.modal input {
    display: block;
    width: 100%;
    height: 38px;
    padding: 4px 12px 8px;
    border: 1px solid #ced4da;
    border-radius: 4px;
    background: #fff;
    font: 16px 'Lato', sans-serif;
    letter-spacing: .2px;
    color: #212529;
}

.modal input.spaced {
    margin-bottom: 16px;
}

.error {
    margin-bottom: 16px;
    font-size: 16px;
    line-height: 24px;
    color: #dc3545;
}

.modal-actions {
    display: flex;
    justify-content: space-between;
    margin-bottom: 16px;
}

.scrollbar {
    flex: none;
    width: 15px;
    padding: 14px 3px 0 4px;
    background: #fafafa;
}

.thumb {
    height: 206px;
    border-radius: 4px;
    background: #c1c1c1;
}

.tv-handle {
    position: absolute;
    right: 0;
    top: 92px;
    width: 26px;
    height: 53px;
    padding: 5px 0 0 4px;
    background: #2d2d2d;
    border-radius: 8px 0 0 0;
    clip-path: polygon(0 0, 100% 0, 100% 100%, 60% 85%, 0 60%);
}

/* dock */
.dock-row {
    flex: 1;
    display: flex;
    justify-content: center;
    padding-top: 1px;
}

.dock {
    height: 55px;
    padding: 7px 4px 0 7px;
    margin-right: 4px;
    display: flex;
    align-items: flex-start;
    gap: 10px;
    border: 1px solid #6a6a6a;
    border-radius: 13px;
    background: #333;
}

.app {
    position: relative;
    width: 36px;
    flex: none;
}

.app svg {
    display: block;
    width: 100%;
}

.app.wide { width: 38px; margin: -1px -1px 0; }
.app.wide2 { width: 44px; margin: -3px -3px 0 -4px; }
.app.jb { width: 42px; margin: -3px -3px 0; }
.app.wide3 { width: 40px; margin: 0 -4px 0 0; }
.app.thumb-win { width: 42px; margin: 2px -5px 0 0; }

.run {
    position: absolute;
    left: 16px;
    bottom: -7px;
    width: 3px;
    height: 3px;
    border-radius: 50%;
    background: #aaa;
}

.dock-sep {
    width: 1px;
    height: 40px;
    margin: 0 3px 0 6px;
    background: #666;
}

.dock-sep.sep2 {
    margin: 0 2px 0 5px;
}

.back-window {
    position: absolute;
    left: 2940px;
    top: 1379px;
    width: 140px;
    height: 10px;
    background: #2a2a28;
}

.preview {
    position: absolute;
    left: 3076px;
    top: 1276px;
    width: 352px;
    height: 152px;
    padding: 4px;
    border-radius: 6px;
    background: #000;
}

.preview svg {
    display: block;
}
```
